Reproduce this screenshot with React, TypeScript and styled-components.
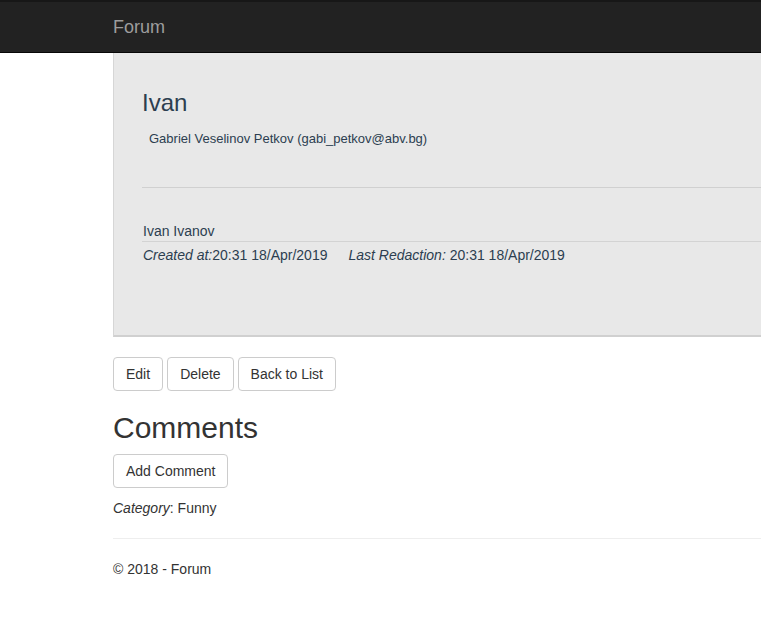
import styled, { createGlobalStyle } from "styled-components"

const GlobalStyle = createGlobalStyle`
    html, body {
        margin: 0;
        padding: 0;
        background: #fff;
    }
    body {
        font-family: "Liberation Sans", Arial, sans-serif;
        font-size: 14px;
        line-height: 20px;
        color: #333;
    }
    * {
        box-sizing: border-box;
    }
`

const Navbar = styled.div`
    height: 53px;
    background: #222;
    border-top: 2px solid #171717;
    border-bottom: 1px solid #080808;
    display: flex;
    align-items: center;
    padding-left: 113px;
`

const Brand = styled.a`
    font-size: 18px;
    color: #9d9d9d;
    text-decoration: none;
`

const Container = styled.div`
    margin-left: 113px;
`

const Panel = styled.div`
    background: #e8e8e8;
    border-left: 1px solid #d6d6d6;
    border-bottom: 2px solid #d0d0d0;
    padding: 37px 0 70px 28px;
    color: #2c3e50;
`

const Title = styled.h3`
    margin: 0;
    font-size: 24px;
    font-weight: 400;
    line-height: 1.1;
`

const Author = styled.p`
    margin: 13px 0 0;
    padding-left: 7px;
    font-size: 13px;
`

const Divider = styled.hr<{ $color?: string; $top: number; $bottom: number }>`
    border: 0;
    border-top: 1px solid ${p => p.$color || "#d0d0d0"};
    margin: ${p => p.$top}px 0 ${p => p.$bottom}px;
`

const Poster = styled.div`
    border-bottom: 1px solid #d3d3d3;
    padding-left: 1px;
`

const Meta = styled.div`
    display: flex;
    gap: 21px;
    padding: 3px 0 0 1px;
`

const Buttons = styled.div`
    display: flex;
    gap: 4px;
    margin-top: 20px;
`

const Button = styled.button`
    font-family: inherit;
    font-size: 14px;
    line-height: 20px;
    color: #333;
    background: #fff;
    border: 1px solid #ccc;
    border-radius: 4px;
    padding: 6px 12px;
    cursor: pointer;
`

const Heading = styled.h2`
    font-size: 30px;
    font-weight: 400;
    line-height: 1.1;
    margin: 20px 0 10px;
`

const Category = styled.p`
    margin: 10px 0 0;
`

const Footer = styled.footer`
    margin: 0;
`

const App = () => {
    return (
        <>
            <GlobalStyle />
            <Navbar>
                <Brand href="#">Forum</Brand>
            </Navbar>
            <Container>
                <Panel>
                    <Title>Ivan</Title>
                    <Author>Gabriel Veselinov Petkov (gabi_petkov@abv.bg)</Author>
                    <Divider $top={38} $bottom={33} />
                    <Poster>Ivan Ivanov</Poster>
                    <Meta>
                        <span><em>Created at:</em>20:31 18/Apr/2019</span>
                        <span><em>Last Redaction:</em> 20:31 18/Apr/2019</span>
                    </Meta>
                </Panel>
                <Buttons>
                    <Button>Edit</Button>
                    <Button>Delete</Button>
                    <Button>Back to List</Button>
                </Buttons>
                <Heading>Comments</Heading>
                <Button>Add Comment</Button>
                <Category><em>Category</em>: Funny</Category>
                <Divider $color="#eee" $top={20} $bottom={20} />
                <Footer>© 2018 - Forum</Footer>
            </Container>
        </>
    )
}

export default App
